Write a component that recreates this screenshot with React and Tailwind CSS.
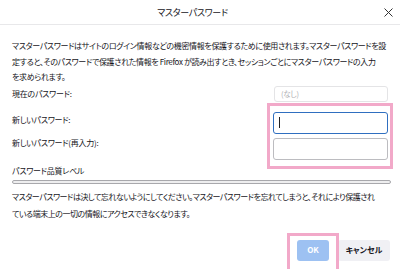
import React from "react";

export default function App() {
  const font = "font-['Noto_Sans_CJK_JP','Noto_Sans',sans-serif] [font-feature-settings:'palt']";
  return (
    <div className={`relative w-[400px] h-[269px] overflow-hidden bg-white text-[#15141a] ${font}`}>
      {/* header */}
      <div className="relative flex h-[25px] items-center justify-center border-b border-[#e8e8ea] pr-[15px]">
        <span className="text-[9px] leading-none tracking-[-0.3px]">マスターパスワード</span>
        <svg className="absolute right-[7px] top-[8px]" width="9" height="9" viewBox="0 0 9 9">
          <path d="M0.5 0.5 L8.5 8.5 M8.5 0.5 L0.5 8.5" stroke="#333" strokeWidth="1" fill="none" />
        </svg>
      </div>

      <div className="pl-[12px] pr-[10px] text-[8px] tracking-[-0.25px]">
        <div className="mt-[13px] whitespace-nowrap leading-[15.5px] tracking-[-0.35px]">
          <div>マスターパスワードはサイトのログイン情報などの機密情報を保護するために使用されます。マスターパスワードを設</div>
          <div>定すると、そのパスワードで保護された情報を Firefox が読み出すとき、セッションごとにマスターパスワードの入力</div>
          <div>を求められます。</div>
        </div>

        <div className="mt-[1px] flex items-start justify-between leading-[15px]">
          <span>現在のパスワード:</span>
          <div className="mr-[2px] flex h-[16px] w-[114px] items-center rounded-[3px] border border-[#e4e4e6] pl-[6px] text-[7.5px] text-[#b0b0b4]">(なし)</div>
        </div>

        <div className="mt-[10px] flex items-start justify-between leading-[15px]">
          <span>新しいパスワード:</span>
          <div className="mr-[2px] flex h-[22px] w-[115px] items-center rounded-[3px] border-[1.5px] border-[#2f6fc0] pl-[5px]">
            <div className="h-[11px] w-[1px] bg-[#222]" />
          </div>
        </div>

        <div className="mt-[4px] flex items-start justify-between leading-[15px]">
          <span className="-mt-[3px]">新しいパスワード(再入力):</span>
          <div className="mr-[2px] h-[22px] w-[115px] rounded-[3px] border border-[#bcbcc0]" />
        </div>

        <div className="mt-[3px] leading-[15px]">パスワード品質レベル</div>
        <div className="mt-[2px] h-[4px] w-[379px] rounded-full border border-[#a8a8ac] bg-[#eeeeef]" />

        <div className="mt-[4px] whitespace-nowrap leading-[17px] tracking-[-0.48px]">
          <div>マスターパスワードは決して忘れないようにしてください。マスターパスワードを忘れてしまうと、それにより保護され</div>
          <div>ている端末上の一切の情報にアクセスできなくなります。</div>
        </div>

        <div className="mt-[18px] flex justify-end gap-[9px] tracking-normal">
          <div className="flex h-[21px] w-[32px] items-center justify-center rounded-[3px] bg-[#9dc1f2] text-[8px] font-bold text-white">OK</div>
          <div className="flex h-[21px] w-[52px] items-center justify-center rounded-[3px] bg-[#f0f0f4] text-[8px] font-bold">キャンセル</div>
        </div>
      </div>

      {/* annotation highlights */}
      <div className="pointer-events-none absolute left-[267px] top-[103px] h-[66px] w-[126px] border-[3px] border-[#f2a9c9]" />
      <div className="pointer-events-none absolute left-[287px] top-[233px] h-[40px] w-[52px] border-[3px] border-[#f2a9c9]" />
    </div>
  );
}
